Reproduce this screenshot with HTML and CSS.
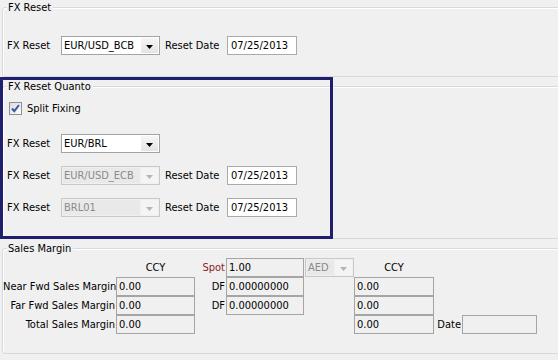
FILE: index.html
```html
<!DOCTYPE html>
<html lang="en">
<head>
  <meta charset="UTF-8">
  <title>FX Reset</title>
  <link rel="stylesheet" href="styles.css">
</head>
<body>
  <div class="page">

    <div class="group group-fx">
      <div class="group-title">FX Reset</div>
      <div class="row first-row">
        <span class="lbl">FX Reset</span>
        <div class="combo">
          <span class="combo-text">EUR/USD_BCB</span>
          <span class="combo-btn"><svg width="7" height="4" viewBox="0 0 7 4"><path d="M0 0h7L3.5 4z"/></svg></span>
        </div>
        <span class="lbl-date">Reset Date</span>
        <div class="date-field">07/25/2013</div>
      </div>
    </div>

    <div class="group group-quanto">
      <div class="group-title">FX Reset Quanto</div>
      <label class="check-row">
        <span class="checkbox">
          <svg width="11" height="11" viewBox="0 0 11 11"><path d="M2 5.5l2.3 2.6L9 2" fill="none" stroke="#3b56a6" stroke-width="2"/></svg>
        </span>
        Split Fixing
      </label>
      <div class="row quanto-first">
        <span class="lbl">FX Reset</span>
        <div class="combo">
          <span class="combo-text">EUR/BRL</span>
          <span class="combo-btn"><svg width="7" height="4" viewBox="0 0 7 4"><path d="M0 0h7L3.5 4z"/></svg></span>
        </div>
      </div>
      <div class="row quanto-row">
        <span class="lbl">FX Reset</span>
        <div class="combo disabled">
          <span class="combo-text">EUR/USD_ECB</span>
          <span class="combo-btn"><svg width="7" height="4" viewBox="0 0 7 4"><path d="M0 0h7L3.5 4z"/></svg></span>
        </div>
        <span class="lbl-date">Reset Date</span>
        <div class="date-field">07/25/2013</div>
      </div>
      <div class="row quanto-row">
        <span class="lbl">FX Reset</span>
        <div class="combo disabled">
          <span class="combo-text">BRL01</span>
          <span class="combo-btn"><svg width="7" height="4" viewBox="0 0 7 4"><path d="M0 0h7L3.5 4z"/></svg></span>
        </div>
        <span class="lbl-date">Reset Date</span>
        <div class="date-field">07/25/2013</div>
      </div>
    </div>

    <div class="group group-margin">
      <div class="group-title">Sales Margin</div>
      <div class="margin-grid">
        <span></span>
        <span class="head">CCY</span>
        <span class="lbl-right spot">Spot</span>
        <div class="field">1.00</div>
        <span></span>
        <div class="combo disabled small">
          <span class="combo-text">AED</span>
          <span class="combo-btn"><svg width="7" height="4" viewBox="0 0 7 4"><path d="M0 0h7L3.5 4z"/></svg></span>
        </div>
        <span class="head">CCY</span>
        <span></span>
        <span></span>

        <span class="lbl-right">Near Fwd Sales Margin</span>
        <div class="field">0.00</div>
        <span class="lbl-right">DF</span>
        <div class="field">0.00000000</div>
        <span></span>
        <span></span>
        <div class="field">0.00</div>
        <span></span>
        <span></span>

        <span class="lbl-right">Far Fwd Sales Margin</span>
        <div class="field">0.00</div>
        <span class="lbl-right">DF</span>
        <div class="field">0.00000000</div>
        <span></span>
        <span></span>
        <div class="field">0.00</div>
        <span></span>
        <span></span>

        <span class="lbl-right">Total Sales Margin</span>
        <div class="field">0.00</div>
        <span></span>
        <span></span>
        <span></span>
        <span></span>
        <div class="field">0.00</div>
        <span class="lbl-right">Date</span>
        <div class="field"></div>
      </div>
    </div>

    <div class="highlight"></div>
  </div>
</body>
</html>
```

FILE: styles.css
```css
body {
  margin: 0;
  background: #f0f0f0;
  font-family: "DejaVu Sans Condensed", "Liberation Sans", sans-serif;
  font-size: 11px;
  color: #000;
  overflow: hidden;
}

.page {
  position: relative;
  padding-top: 7px;
}

.group {
  border: 1px solid #d5dadf;
  border-radius: 3px;
  box-shadow: inset 1px 1px 0 #fff;
  margin: 0 -10px 0 2px;
  padding: 0 0 0 4px;
}

.group + .group {
  margin-top: 9px;
}

.group-title {
  width: fit-content;
  margin: -7px 0 0 0;
  padding: 0 2px 0 1px;
  height: 13px;
  line-height: 13px;
  background: #f0f0f0;
}

.row {
  display: flex;
  align-items: center;
  height: 19px;
}

.group-fx .first-row {
  margin-top: 22px;
}

.group-fx {
  padding-bottom: 21px;
}

.lbl {
  width: 54px;
}

.lbl-date {
  width: 62px;
  margin-left: 5px;
}

.combo {
  display: flex;
  width: 99px;
  height: 19px;
  box-sizing: border-box;
  border: 1px solid #a3a3a3;
  background: #fff;
}

.combo-text {
  flex: 1;
  padding-left: 2px;
  line-height: 17px;
  white-space: nowrap;
  overflow: hidden;
}

.combo-btn {
  width: 17px;
  display: flex;
  align-items: center;
  justify-content: center;
  background: linear-gradient(#f6f6f6, #e4e4e4);
  margin: 1px;
}

.combo-btn svg {
  fill: #000;
  margin-top: 2px;
}

.combo.disabled {
  background: #f0f0f0;
  border-color: #c8c8c8;
  color: #8a8a8a;
}

.combo.disabled .combo-text {
  background: #e9e9e9;
  margin: 1px 0 1px 1px;
  padding-left: 1px;
  line-height: 15px;
}

.combo.disabled .combo-btn {
  background: #f4f4f4;
}

.combo.disabled .combo-btn svg {
  fill: #b4b4b4;
}

.date-field {
  width: 70px;
  height: 19px;
  box-sizing: border-box;
  border: 1px solid #aaaaaa;
  background: #fff;
  padding-left: 3px;
  line-height: 17px;
}

.group-quanto {
  padding-bottom: 21px;
}

.check-row {
  display: flex;
  align-items: center;
  gap: 5px;
  margin: 8px 0 0 2px;
  height: 14px;
}

.checkbox {
  width: 13px;
  height: 13px;
  box-sizing: border-box;
  border: 1px solid #8e8f8f;
  background: linear-gradient(135deg, #dcdcdc, #fdfdfd);
  display: flex;
  align-items: center;
  justify-content: center;
}

.quanto-first {
  margin-top: 19px;
}

.quanto-row {
  margin-top: 13px;
}

.group-margin {
  padding: 0 0 19px 0;
}

.group-margin .group-title {
  margin-left: 4px;
}

.margin-grid {
  display: grid;
  grid-template-columns: 113px 79px 31px 78px 1px 49px 80px 28px 75px;
  grid-auto-rows: 19px;
  margin-top: 3px;
  align-items: center;
}

.head {
  text-align: center;
}

.lbl-right {
  text-align: right;
  white-space: nowrap;
  padding-right: 1px;
}

.spot {
  color: #8b1a1a;
}

.field {
  height: 19px;
  box-sizing: border-box;
  border: 1px solid #a5a5a5;
  padding-left: 2px;
  line-height: 17px;
  background: #f0f0f0;
}

.combo.small {
  width: 49px;
}

.highlight {
  position: absolute;
  left: 0;
  top: 77px;
  width: 333px;
  height: 162px;
  box-sizing: border-box;
  border: 3px solid #1f1f6e;
  pointer-events: none;
}
```
